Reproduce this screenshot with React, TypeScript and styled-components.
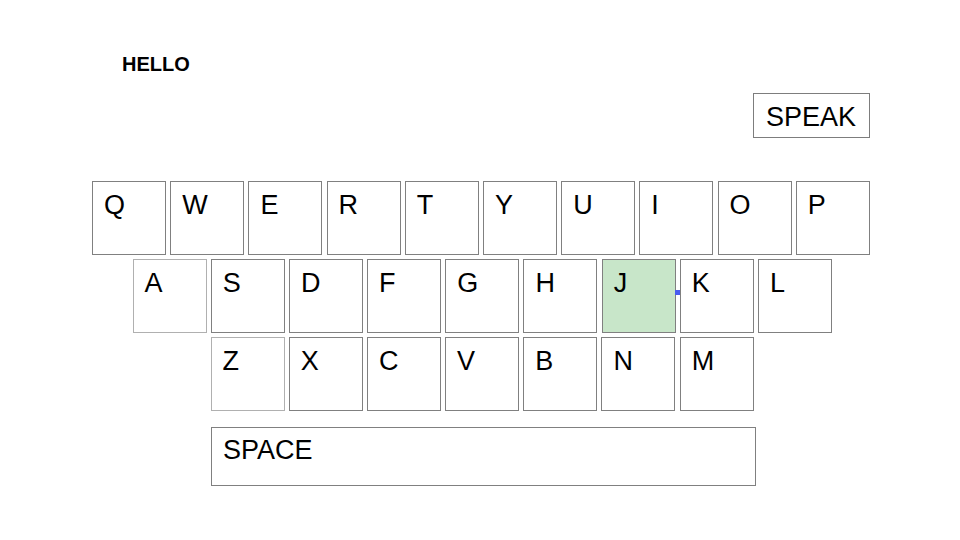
import styled, { createGlobalStyle } from 'styled-components'

const GlobalStyle = createGlobalStyle`
    html, body {
        margin: 0;
        padding: 0;
        background: #ffffff;
    }
    body {
        font-family: "Liberation Sans", Arial, sans-serif;
        color: #000000;
    }
`

const Page = styled.div`
    display: flex;
    flex-direction: column;
    width: 778px;
    margin-left: 92px;
    padding-top: 53px;
    box-sizing: border-box;
`

const Output = styled.div`
    margin-left: 30px;
    font-size: 20px;
    font-weight: 700;
    line-height: 23px;
    height: 23px;
`

const SpeakRow = styled.div`
    display: flex;
    justify-content: flex-end;
    margin-top: 17px;
`

const SpeakBtn = styled.button`
    display: flex;
    align-items: center;
    height: 45px;
    width: 117px;
    padding: 3px 0 0 12px;
    box-sizing: border-box;
    border: 1px solid #7d7d7d;
    background: #ffffff;
    font-family: "Liberation Sans", Arial, sans-serif;
    font-size: 27px;
    color: #000000;
    cursor: pointer;
`

const Keyboard = styled.div`
    display: flex;
    flex-direction: column;
    gap: 4px;
    margin-top: 43px;
`

const KeyRow = styled.div<{ $offset: number }>`
    display: flex;
    gap: 4.2px;
    margin-left: ${p => p.$offset}px;
`

const Key = styled.button<{ $active?: boolean; $faint?: boolean }>`
    position: relative;
    display: flex;
    align-items: flex-start;
    justify-content: flex-start;
    flex: none;
    width: 74px;
    height: 74px;
    padding: 8px 0 0 11px;
    box-sizing: border-box;
    border: 1px solid ${p => (p.$faint ? '#b0b0b0' : '#808080')};
    background: ${p => (p.$active ? '#c8e6c9' : '#ffffff')};
    font-family: "Liberation Sans", Arial, sans-serif;
    font-size: 27px;
    line-height: 31px;
    color: #000000;
    text-align: left;
    cursor: pointer;
`

const Caret = styled.span`
    position: absolute;
    left: 100%;
    top: 30px;
    width: 5px;
    height: 5px;
    background: #4a5cf0;
`

const SpaceBar = styled.button`
    display: flex;
    align-items: flex-start;
    width: 545px;
    height: 59px;
    margin: 16px 0 0 119px;
    padding: 7px 0 0 11px;
    box-sizing: border-box;
    border: 1px solid #808080;
    background: #ffffff;
    font-family: "Liberation Sans", Arial, sans-serif;
    font-size: 27px;
    line-height: 31px;
    color: #000000;
    text-align: left;
    cursor: pointer;
`

const rows = [
    { keys: 'QWERTYUIOP', offset: 0 },
    { keys: 'ASDFGHJKL', offset: 40.5 },
    { keys: 'ZXCVBNM', offset: 118.5 },
]

const faintKeys = ['A', 'Z']

export default function App() {
    return (
        <>
            <GlobalStyle />
            <Page>
                <Output>HELLO</Output>
                <SpeakRow>
                    <SpeakBtn>SPEAK</SpeakBtn>
                </SpeakRow>
                <Keyboard>
                    {rows.map(row => (
                        <KeyRow key={row.keys} $offset={row.offset}>
                            {row.keys.split('').map(k => (
                                <Key key={k} $active={k === 'J'} $faint={faintKeys.includes(k)}>
                                    {k}
                                    {k === 'J' && <Caret />}
                                </Key>
                            ))}
                        </KeyRow>
                    ))}
                </Keyboard>
                <SpaceBar>SPACE</SpaceBar>
            </Page>
        </>
    )
}
